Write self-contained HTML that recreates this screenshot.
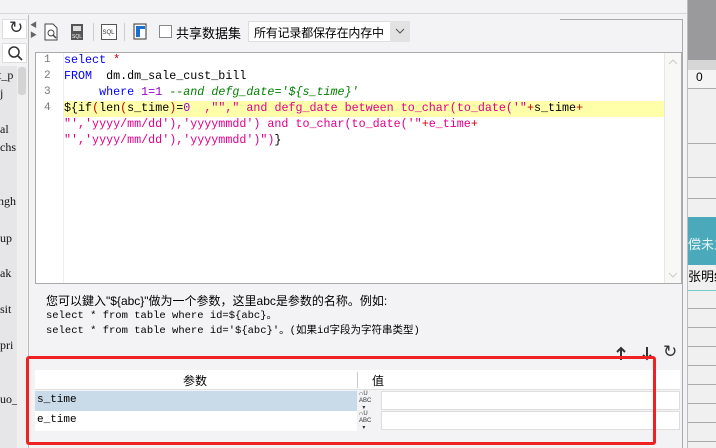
<!DOCTYPE html>
<html><head><meta charset="utf-8"><style>
*{margin:0;padding:0;box-sizing:border-box}
body{width:716px;height:448px;overflow:hidden;background:#f3f3f5;position:relative;font-family:"Liberation Sans","Noto Sans CJK SC",sans-serif;font-size:12px;color:#000}
.a{position:absolute}
.mono{font-family:"Liberation Mono","Noto Sans CJK SC",monospace}
.code{font-size:11.7px;line-height:16px;white-space:pre}
.kw{color:#0000ff}.cm{color:#008000;font-style:italic}.st{color:#e0008a}.pu{color:#9900cc}.rd{color:#cc0000}
</style></head><body>
<div class="a" style="left:0;top:0;width:687px;height:14px;background:#f3f3f5;border-bottom:1px solid #d8d8d8"></div>
<div class="a" style="left:0;top:15px;width:28px;height:433px;background:#f3f3f5"></div>
<div class="a" style="left:2px;top:19px;width:25px;height:20px;background:#fff;border:1px solid #ddd"></div>
<div class="a" style="left:9px;top:18px;font-size:17px;color:#333">&#x21bb;</div>
<div class="a" style="left:2px;top:43px;width:25px;height:20px;background:#fff;border:1px solid #ddd"></div>
<svg class="a" style="left:7px;top:45px" width="16" height="16"><circle cx="7" cy="7" r="5" fill="none" stroke="#333" stroke-width="1.5"/><line x1="11" y1="11" x2="15" y2="15" stroke="#333" stroke-width="1.7"/></svg>
<div class="a" style="left:0;top:66px;width:17px;height:382px;background:#e6e6e8"></div>
<div class="a" style="left:17px;top:66px;width:10px;height:382px;background:#f0f0f0"></div>
<div class="a" style="left:18px;top:67px;width:8px;height:28px;background:#d4d4d4;border-radius:3px"></div>
<div class="a" style="left:0;top:66px;width:17px;height:382px;overflow:hidden;font-family:'Liberation Serif',serif;font-size:12px;line-height:12px;color:#111">
<div style="position:absolute;top:3px;left:-2px">t_p</div>
<div style="position:absolute;top:21px;left:0">j</div>
<div style="position:absolute;top:57px;left:0">al</div>
<div style="position:absolute;top:75px;left:0">chs</div>
<div style="position:absolute;top:129px;left:-2px">ngh</div>
<div style="position:absolute;top:166px;left:0">up</div>
<div style="position:absolute;top:201px;left:0">ak</div>
<div style="position:absolute;top:237px;left:0">sit</div>
<div style="position:absolute;top:273px;left:0">pri</div>
<div style="position:absolute;top:327px;left:0">uo_</div>
</div>
<div class="a" style="left:28px;top:15px;width:1px;height:433px;background:#bbb"></div>
<div class="a" style="left:30px;top:21px;font-size:7px;color:#666;line-height:10px">&#9664;<br>&#9654;</div>
<svg class="a" style="left:43px;top:23px" width="16" height="18"><path d="M2 1h8l4 4v12H2z" fill="#fff" stroke="#444"/><circle cx="8" cy="10" r="3" fill="none" stroke="#444"/><line x1="10" y1="12" x2="13" y2="15" stroke="#444" stroke-width="1.5"/></svg>
<svg class="a" style="left:70px;top:23px" width="14" height="18"><rect x="1" y="1" width="12" height="16" fill="#555"/><rect x="3" y="3" width="8" height="5" fill="#ddd"/><text x="2" y="15" font-size="5" fill="#fff" font-family="Liberation Sans">SQL</text></svg>
<div class="a" style="left:93px;top:23px;width:1px;height:18px;background:#ccc"></div>
<svg class="a" style="left:101px;top:24px" width="16" height="16"><rect x="0.5" y="0.5" width="15" height="15" fill="#fff" stroke="#555"/><text x="1.5" y="10" font-size="6" fill="#333" font-family="Liberation Sans">SQL</text></svg>
<div class="a" style="left:124px;top:23px;width:1px;height:18px;background:#ccc"></div>
<svg class="a" style="left:133px;top:23px" width="15" height="18"><rect x="1" y="1" width="12" height="15" fill="#fff" stroke="#333"/><rect x="3" y="3" width="9" height="11" fill="#1a6fd0"/><path d="M7 6h5v8H7z" fill="#fff"/></svg>
<div class="a" style="left:159px;top:25px;width:13px;height:13px;border:1px solid #888;background:#fff"></div>
<div class="a" style="left:176px;top:23px;font-size:13px">共享数据集</div>
<div class="a" style="left:248px;top:21px;width:162px;height:21px;background:#fff;border:1px solid #ddd"></div>
<div class="a" style="left:254px;top:24px;font-size:12px;letter-spacing:-0.2px;white-space:nowrap">所有记录都保存在内存中</div>
<div class="a" style="left:390px;top:21px;width:20px;height:21px;background:#e2e2e2"></div>
<svg class="a" style="left:395px;top:28px" width="10" height="7"><path d="M1 1l4 4 4-4" fill="none" stroke="#555"/></svg>
<div class="a" style="left:682px;top:19px;width:1px;height:429px;background:#aaa"></div>
<div class="a" style="left:560px;top:19px;width:123px;height:1px;background:#aaa"></div>
<div class="a" style="left:35px;top:52px;width:647px;height:232px;background:#fff;border:1px solid #aaa"></div>
<div class="a" style="left:63px;top:53px;width:1px;height:230px;background:#eee"></div>
<div class="a" style="left:64px;top:101px;width:600px;height:16px;background:#ffffaa"></div>
<div class="a" style="left:664px;top:53px;width:17px;height:230px;background:#f8f8f6;border-left:1px solid #e8e8e0"></div>
<svg class="a" style="left:668px;top:58px" width="10" height="7"><path d="M1 6l4-4 4 4" fill="none" stroke="#ccc"/></svg>
<svg class="a" style="left:668px;top:272px" width="10" height="7"><path d="M1 1l4 4 4-4" fill="none" stroke="#ccc"/></svg>
<div class="a mono code" style="left:44px;top:52px;color:#777;font-size:11px">1
2
3
4</div>
<div class="a mono code" style="left:64px;top:52px"><span class="kw">select</span> <span class="rd">*</span>
<span class="kw">FROM</span>  dm.dm_sale_cust_bill
     <span class="kw">where</span> <span class="pu">1=1</span> <span class="cm">--and defg_date='${s_time}'</span>
${if<span class="rd">(</span>len<span class="rd">(</span>s_time<span class="rd">)</span>=<span class="pu">0</span>  <span class="st">,"","</span><span class="st"> and defg_date between to_char(to_date('"</span><span class="rd">+</span>s_time<span class="rd">+</span>
<span class="st">"','yyyy/mm/dd'),'yyyymmdd') and to_char(to_date('"</span><span class="rd">+</span><span class="st">e_time</span><span class="rd">+</span>
<span class="st">"','yyyy/mm/dd'),'yyyymmdd')")</span>}</div>
<div class="a" style="left:46px;top:292px;font-size:12px">您可以鍵入"${abc}"做为一个参数，这里abc是参数的名称。例如:</div>
<div class="a mono" style="left:46px;top:309px;font-size:10.5px;line-height:15px;white-space:pre">select * from table where id=${abc}。
select * from table where id='${abc}'。(如果id字段为字符串类型)</div>
<svg class="a" style="left:614px;top:346px" width="14" height="15"><path d="M7 2v12M3 6l4-4 4 4" fill="none" stroke="#333" stroke-width="2"/></svg>
<svg class="a" style="left:640px;top:346px" width="14" height="15"><path d="M7 1v12M3 9l4 4 4-4" fill="none" stroke="#333" stroke-width="2"/></svg>
<div class="a" style="left:663px;top:342px;font-size:17px;color:#333">&#x21bb;</div>
<div class="a" style="left:35px;top:370px;width:645px;height:20px;background:#fff;border-bottom:1px solid #e0e0e0"></div>
<div class="a" style="left:357px;top:372px;width:1px;height:16px;background:#ccc"></div>
<div class="a" style="left:183px;top:372px;font-size:12px">参数</div>
<div class="a" style="left:372px;top:372px;font-size:12px">值</div>
<div class="a" style="left:35px;top:391px;width:322px;height:20px;background:#c9dbe8"></div>
<div class="a" style="left:35px;top:411px;width:322px;height:20px;background:#fff"></div>
<div class="a" style="left:357px;top:391px;width:23px;height:40px;background:#f3f3f5"></div>
<div class="a" style="left:381px;top:391px;width:299px;height:19px;background:#fff;border:1px solid #ddd"></div>
<div class="a" style="left:381px;top:411px;width:299px;height:19px;background:#fff;border:1px solid #ddd"></div>
<div class="a mono" style="left:37px;top:394px;font-size:11px">s_time</div>
<div class="a mono" style="left:37px;top:414px;font-size:11px">e_time</div>
<div class="a" style="left:359px;top:391px;font-size:6px;line-height:7px;color:#333">&#x2229;U<br>ABC<br>&nbsp;&nbsp;&#9662;</div>
<div class="a" style="left:359px;top:411px;font-size:6px;line-height:7px;color:#333">&#x2229;U<br>ABC<br>&nbsp;&nbsp;&#9662;</div>
<div class="a" style="left:26px;top:356px;width:630px;height:89px;border:3px solid #ee2222;border-radius:3px"></div>
<div class="a" style="left:687px;top:0;width:29px;height:448px;background:#f0f0f0;border-left:1px solid #bbb"></div>
<div class="a" style="left:688px;top:0;width:28px;height:60px;background:#9a9a9c"></div>
<div class="a" style="left:688px;top:60px;width:28px;height:10px;background:#d6d6d6"></div>
<div class="a" style="left:688px;top:70px;width:28px;height:19px;background:#f4f4f4;border-bottom:1px solid #aaa;font-size:12px;padding-left:8px">0</div>
<div class="a" style="left:688px;top:143px;width:28px;height:1px;background:#aaa"></div>
<div class="a" style="left:688px;top:177px;width:28px;height:1px;background:#aaa"></div>
<div class="a" style="left:688px;top:198px;width:28px;height:1px;background:#aaa"></div>
<div class="a" style="left:688px;top:217px;width:28px;height:48px;background:#4aaabb;color:#e8f4f6;font-size:13px;padding-top:17px;white-space:nowrap;overflow:hidden">偿未立</div>
<div class="a" style="left:688px;top:266px;width:28px;height:20px;font-size:13px;white-space:nowrap;overflow:hidden">张明细</div>
<div class="a" style="left:688px;top:290px;width:28px;height:1px;background:#7cc"></div>
<div class="a" style="left:688px;top:308px;width:28px;height:1px;background:#aaa"></div>
<div class="a" style="left:688px;top:327px;width:28px;height:1px;background:#aaa"></div>
<div class="a" style="left:688px;top:346px;width:28px;height:1px;background:#aaa"></div>
<div class="a" style="left:688px;top:365px;width:28px;height:1px;background:#aaa"></div>
<div class="a" style="left:688px;top:384px;width:28px;height:1px;background:#aaa"></div>
<div class="a" style="left:688px;top:403px;width:28px;height:1px;background:#aaa"></div>
<div class="a" style="left:688px;top:422px;width:28px;height:1px;background:#aaa"></div>
<div class="a" style="left:688px;top:441px;width:28px;height:1px;background:#aaa"></div>
</body></html>
